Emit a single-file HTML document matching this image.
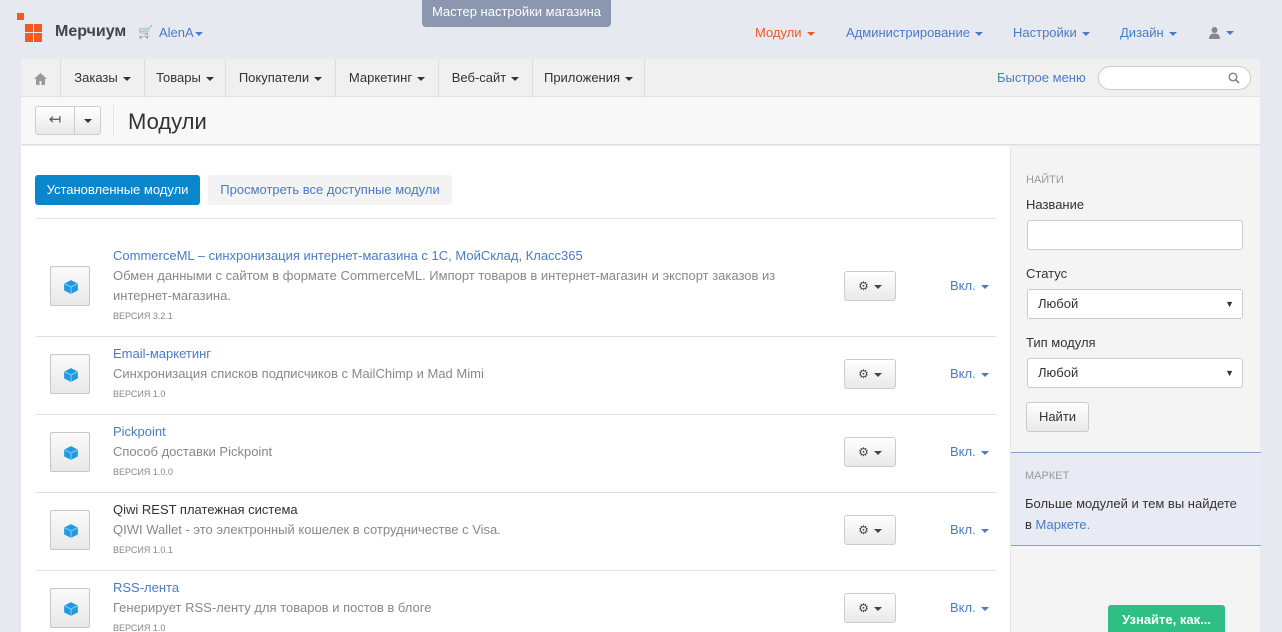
<!DOCTYPE html>
<html><head><meta charset="utf-8"><style>
*{box-sizing:border-box;margin:0;padding:0}
html,body{width:1282px;height:632px;overflow:hidden}
body{background:#e7e9f1;font-family:"Liberation Sans",sans-serif;font-size:13px;color:#333;position:relative}
a{color:#4a7bc6;text-decoration:none}
.abs{position:absolute;white-space:nowrap}
.caret{display:inline-block;width:0;height:0;border-left:4px solid transparent;border-right:4px solid transparent;border-top:4px solid currentColor;vertical-align:middle;margin-left:5px}
.nav{left:21px;top:59px;width:1239px;height:38px;background:#f0f0f0;border-bottom:1px solid #e2e2e2}
.nav .it{position:absolute;top:0;height:38px;line-height:38px;font-size:13px;color:#333;border-right:1px solid #ddd;text-align:center;white-space:nowrap}
.hdr{left:21px;top:97px;width:1239px;height:48px;background:#f8f8f8;border-bottom:1px solid #e0e0e0}
.main{left:21px;top:146px;width:989px;height:486px;background:#fff}
.side{left:1010px;top:146px;width:250px;height:486px;background:#f4f4f4;border-left:1px solid #e6e6e6}
.btn{position:absolute;background:linear-gradient(#fff,#e9e9e9);border:1px solid #ccc;border-radius:3px;white-space:nowrap}
.row{position:absolute;left:15px;width:960px;border-bottom:1px solid #e2e2e2}
.ic{position:absolute;left:14px;width:40px;height:40px;border:1px solid #c8c8c8;border-radius:2px;background:linear-gradient(#fafafa,#e8e8e8)}
.ic svg{position:absolute;left:12px;top:12px}
.t{position:absolute;left:77px;font-size:13px;line-height:20px;color:#888;white-space:nowrap}
.t b{font-weight:normal;color:#4a7bc6;display:block}
.t small{font-size:9px;color:#888;display:block;line-height:20px}
.gear{position:absolute;left:808px;width:52px;height:30px;font-size:12px;text-align:center;line-height:28px;color:#444}
.vkl{position:absolute;left:914px;color:#4a7bc6;font-size:13px;white-space:nowrap}
.inp{position:absolute;left:16px;width:216px;height:30px;background:#fff;border:1px solid #ccc;border-radius:3px;padding-left:10px;line-height:28px;font-size:13px}
</style></head><body>
<div class="abs" style="left:17px;top:13px;width:7px;height:7px;background:#f15a24"></div>
<div class="abs" style="left:25px;top:24px;width:8px;height:8px;background:#f15a24"></div>
<div class="abs" style="left:34px;top:24px;width:8px;height:8px;background:#f15a24"></div>
<div class="abs" style="left:25px;top:33px;width:8px;height:9px;background:#f15a24"></div>
<div class="abs" style="left:34px;top:33px;width:8px;height:9px;background:#f15a24"></div>
<div class="abs" style="left:55px;top:23px;font-size:16px;font-weight:bold;color:#444">Мерчиум</div>
<div class="abs" style="left:138px;top:25px;font-size:12px;color:#888">🛒</div>
<div class="abs" style="left:159px;top:25px;font-size:13px;color:#4a7bc6">AlenA<span class="caret" style="margin-left:1px"></span></div>
<div class="abs" style="left:422px;top:0;width:189px;height:27px;background:#8a97ae;border-radius:0 0 4px 4px;color:#fff;font-size:13px;text-align:center;line-height:24px">Мастер настройки магазина</div>
<div class="abs" style="left:755px;top:25px;color:#f15a24">Модули<span class="caret"></span></div>
<div class="abs" style="left:846px;top:25px;color:#4a7bc6">Администрирование<span class="caret"></span></div>
<div class="abs" style="left:1013px;top:25px;color:#4a7bc6">Настройки<span class="caret"></span></div>
<div class="abs" style="left:1120px;top:25px;color:#4a7bc6">Дизайн<span class="caret"></span></div>
<div class="abs" style="left:1208px;top:24px;color:#888"><svg width="13" height="13" viewBox="0 0 13 13" style="vertical-align:middle"><circle cx="6.5" cy="4" r="3" fill="#888"/><path d="M1 13c0-4 2-5.5 5.5-5.5S12 9 12 13z" fill="#888"/></svg><span class="caret" style="color:#4a7bc6"></span></div>

<div class="abs nav">
<div class="it" style="left:0;width:40px;color:#999"><svg width="13" height="12" viewBox="0 0 13 12" style="vertical-align:middle"><path d="M6.5 0L0 6h2v6h3.5V8h2v4H11V6h2z" fill="#999"/></svg></div>
<div class="it" style="left:40px;width:84px">Заказы<span class="caret"></span></div>
<div class="it" style="left:124px;width:81px">Товары<span class="caret"></span></div>
<div class="it" style="left:205px;width:110px">Покупатели<span class="caret"></span></div>
<div class="it" style="left:315px;width:103px">Маркетинг<span class="caret"></span></div>
<div class="it" style="left:418px;width:94px">Веб-сайт<span class="caret"></span></div>
<div class="it" style="left:512px;width:112px">Приложения<span class="caret"></span></div>
<div class="abs" style="left:976px;top:11px;color:#4a7bc6;font-size:13px">Быстрое меню</div>
<div class="abs" style="left:1077px;top:7px;width:153px;height:24px;background:#fff;border:1px solid #ccc;border-radius:12px"><svg width="12" height="12" viewBox="0 0 12 12" style="position:absolute;right:10px;top:5px"><circle cx="5" cy="5" r="3.8" fill="none" stroke="#888" stroke-width="1.5"/><path d="M8 8l3 3" stroke="#888" stroke-width="1.8"/></svg></div>
</div>

<div class="abs hdr">
<div class="btn" style="left:14px;top:9px;width:40px;height:29px;border-radius:3px 0 0 3px;text-align:center;line-height:26px;font-size:15px;color:#555">↤</div>
<div class="btn" style="left:53px;top:9px;width:27px;height:29px;border-radius:0 3px 3px 0;text-align:center;line-height:26px;color:#333"><span class="caret" style="margin:0"></span></div>
<div class="abs" style="left:92px;top:8px;width:1px;height:32px;background:#e2e2e2"></div>
<div class="abs" style="left:107px;top:12px;font-size:22px;color:#333">Модули</div>
</div>

<div class="abs main">
<div class="abs" style="left:14px;top:29px;width:165px;height:30px;background:#0a86cd;border-radius:3px;color:#fff;text-align:center;line-height:30px;font-size:13px">Установленные модули</div>
<div class="abs" style="left:187px;top:29px;width:244px;height:30px;background:#f3f3f3;border-radius:3px;color:#4a7bc6;text-align:center;line-height:30px;font-size:13px">Просмотреть все доступные модули</div>
<div class="abs" style="left:15px;top:72px;width:960px;height:1px;background:#e2e2e2"></div>

<div class="row" style="top:73px;height:118px">
<div class="ic" style="top:47px"><svg width="16" height="16" viewBox="0 0 14 14"><path d="M7 1l6 3v6l-6 3-6-3V4z" fill="#1e9be0"/><path d="M1 4l6 3 6-3M7 7v6" stroke="#7cc8f0" stroke-width="1" fill="none"/></svg></div>
<div class="t" style="top:27px"><b>CommerceML – синхронизация интернет-магазина с 1С, МойСклад, Класс365</b>Обмен данными с сайтом в формате CommerceML. Импорт товаров в интернет-магазин и экспорт заказов из<br>интернет-магазина.<small>ВЕРСИЯ 3.2.1</small></div>
<div class="btn gear" style="top:52px">⚙<span class="caret"></span></div>
<div class="vkl" style="top:59px">Вкл.<span class="caret"></span></div>
</div>
<div class="row" style="top:191px;height:78px">
<div class="ic" style="top:17px"><svg width="16" height="16" viewBox="0 0 14 14"><path d="M7 1l6 3v6l-6 3-6-3V4z" fill="#1e9be0"/><path d="M1 4l6 3 6-3M7 7v6" stroke="#7cc8f0" stroke-width="1" fill="none"/></svg></div>
<div class="t" style="top:7px"><b>Email-маркетинг</b>Синхронизация списков подписчиков с MailChimp и Mad Mimi<small>ВЕРСИЯ 1.0</small></div>
<div class="btn gear" style="top:22px">⚙<span class="caret"></span></div>
<div class="vkl" style="top:29px">Вкл.<span class="caret"></span></div>
</div>
<div class="row" style="top:269px;height:78px">
<div class="ic" style="top:17px"><svg width="16" height="16" viewBox="0 0 14 14"><path d="M7 1l6 3v6l-6 3-6-3V4z" fill="#1e9be0"/><path d="M1 4l6 3 6-3M7 7v6" stroke="#7cc8f0" stroke-width="1" fill="none"/></svg></div>
<div class="t" style="top:7px"><b>Pickpoint</b>Способ доставки Pickpoint<small>ВЕРСИЯ 1.0.0</small></div>
<div class="btn gear" style="top:22px">⚙<span class="caret"></span></div>
<div class="vkl" style="top:29px">Вкл.<span class="caret"></span></div>
</div>
<div class="row" style="top:347px;height:78px">
<div class="ic" style="top:17px"><svg width="16" height="16" viewBox="0 0 14 14"><path d="M7 1l6 3v6l-6 3-6-3V4z" fill="#1e9be0"/><path d="M1 4l6 3 6-3M7 7v6" stroke="#7cc8f0" stroke-width="1" fill="none"/></svg></div>
<div class="t" style="top:7px"><b style="color:#333">Qiwi REST платежная система</b>QIWI Wallet - это электронный кошелек в сотрудничестве с Visa.<small>ВЕРСИЯ 1.0.1</small></div>
<div class="btn gear" style="top:22px">⚙<span class="caret"></span></div>
<div class="vkl" style="top:29px">Вкл.<span class="caret"></span></div>
</div>
<div class="row" style="top:425px;height:78px;border:0">
<div class="ic" style="top:17px"><svg width="16" height="16" viewBox="0 0 14 14"><path d="M7 1l6 3v6l-6 3-6-3V4z" fill="#1e9be0"/><path d="M1 4l6 3 6-3M7 7v6" stroke="#7cc8f0" stroke-width="1" fill="none"/></svg></div>
<div class="t" style="top:7px"><b>RSS-лента</b>Генерирует RSS-ленту для товаров и постов в блоге<small>ВЕРСИЯ 1.0</small></div>
<div class="btn gear" style="top:22px">⚙<span class="caret"></span></div>
<div class="vkl" style="top:29px">Вкл.<span class="caret"></span></div>
</div>
</div>

<div class="abs side">
<div class="abs" style="left:15px;top:28px;font-size:11px;color:#999">НАЙТИ</div>
<div class="abs" style="left:15px;top:51px">Название</div>
<div class="inp" style="top:74px"></div>
<div class="abs" style="left:15px;top:120px">Статус</div>
<div class="inp" style="top:143px">Любой<span style="position:absolute;right:8px;font-size:9px">▼</span></div>
<div class="abs" style="left:15px;top:189px">Тип модуля</div>
<div class="inp" style="top:212px">Любой<span style="position:absolute;right:8px;font-size:9px">▼</span></div>
<div class="btn" style="left:15px;top:256px;width:63px;height:30px;text-align:center;line-height:28px">Найти</div>
<div class="abs" style="left:0;top:306px;width:250px;height:94px;background:#e8ebf3;border-top:1px solid #8aa2c8;border-bottom:1px solid #8aa2c8">
<div class="abs" style="left:14px;top:17px;font-size:11px;color:#999">МАРКЕТ</div>
<div class="abs" style="left:14px;top:40px;line-height:21px">Больше модулей и тем вы найдете<br>в <a>Маркете.</a></div>
</div>
<div class="abs" style="left:97px;top:459px;width:117px;height:32px;background:#2fbf85;border-radius:3px;color:#fff;font-weight:bold;text-align:center;line-height:30px">Узнайте, как...</div>
</div>
</body></html>
